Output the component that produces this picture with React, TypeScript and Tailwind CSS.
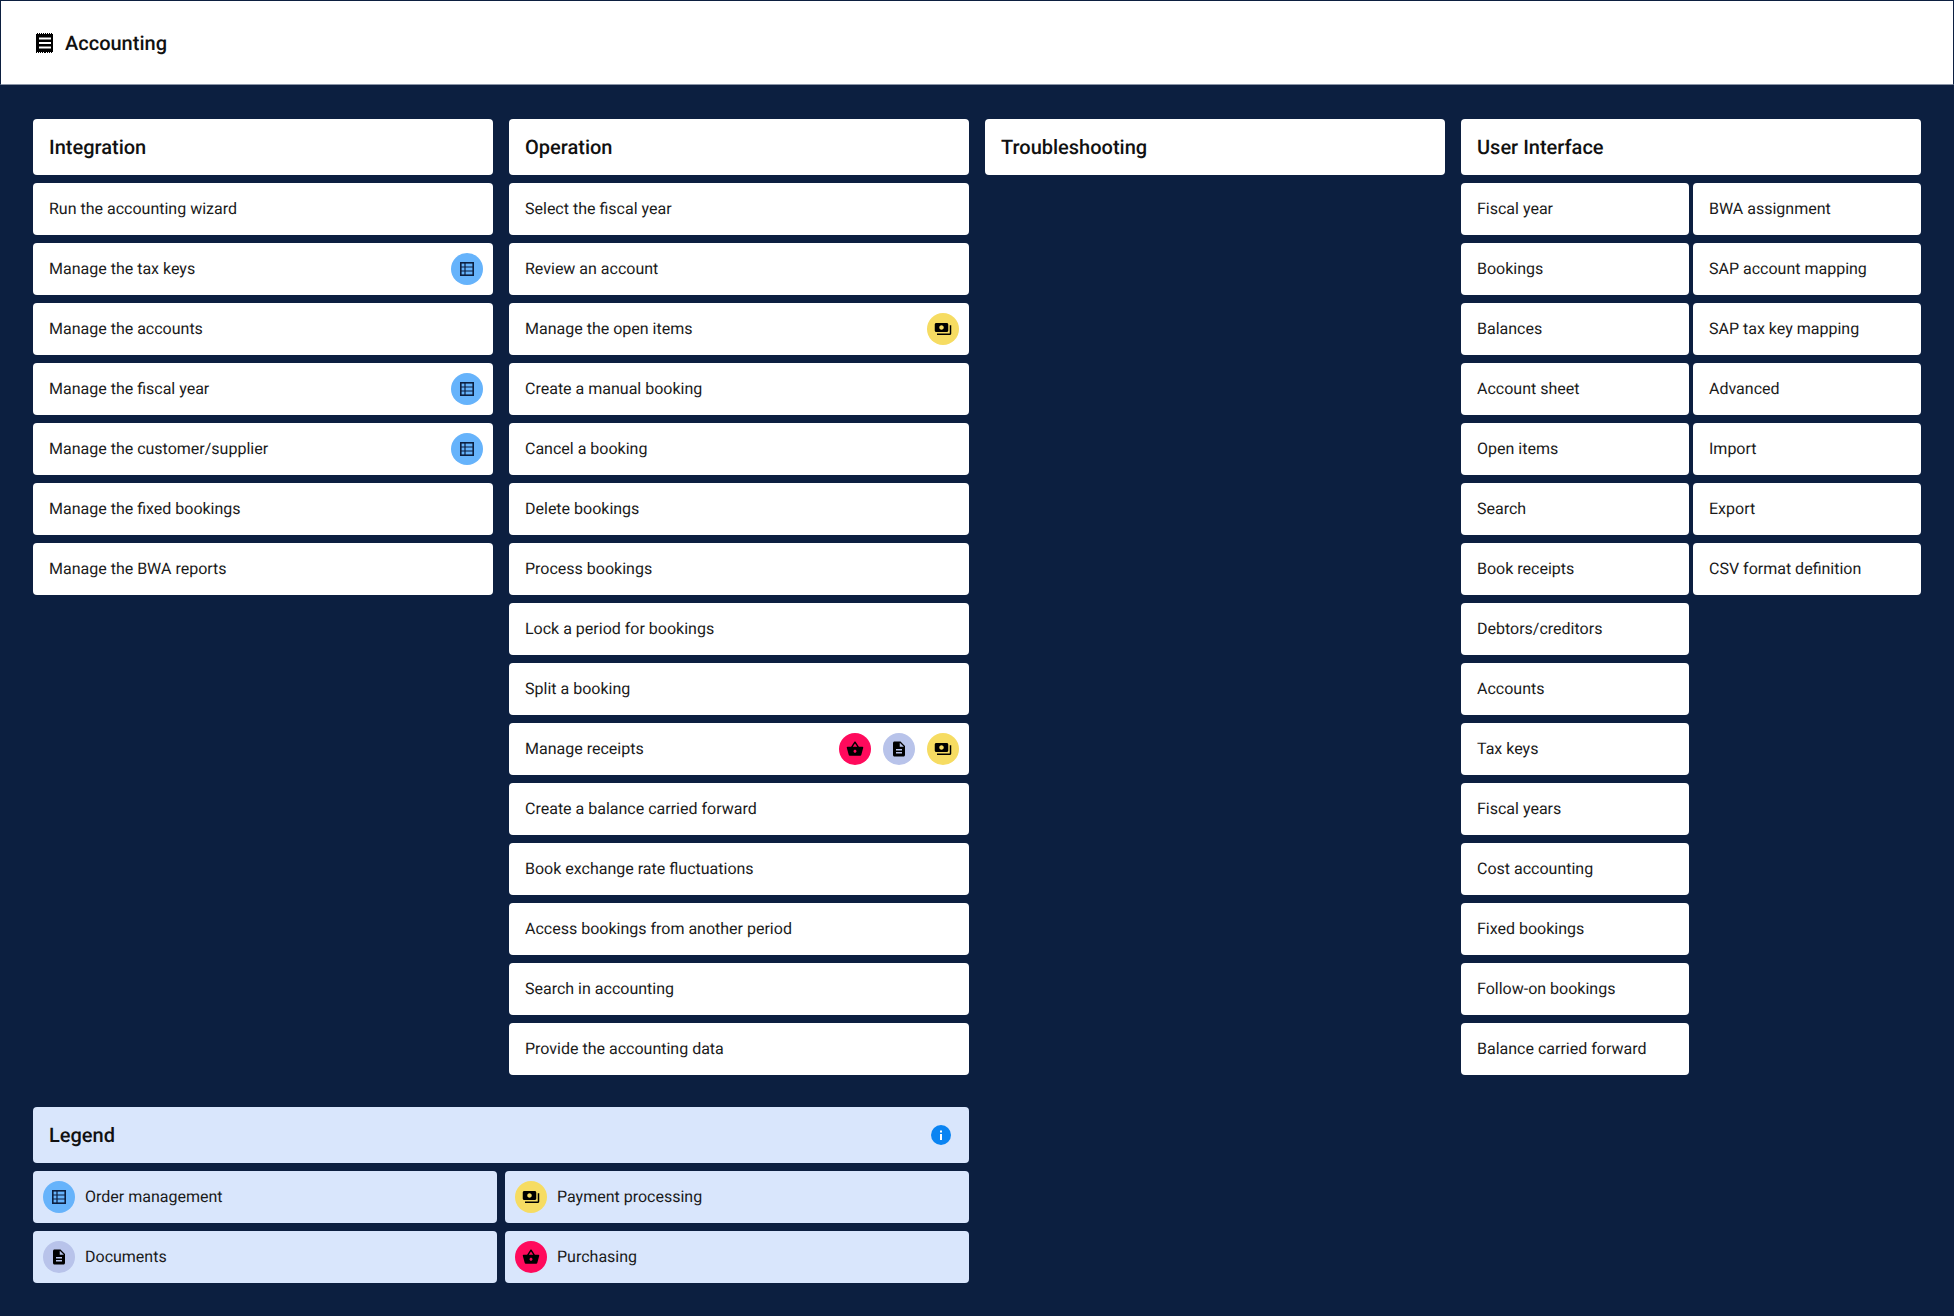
import React from 'react';

const font = 'font-["Roboto",_"Liberation_Sans",_sans-serif]';

type IconKind = 'orders' | 'payment' | 'documents' | 'purchasing';

const TableIcon = () => (
  <svg width="14" height="14" viewBox="0 0 14 14">
    <rect x="0.8" y="0.8" width="12.4" height="12.4" fill="none" stroke="#0c1f40" strokeWidth="1.6" />
    <path d="M5 1v12M1 5h12M1 9h12" stroke="#0c1f40" strokeWidth="1.2" fill="none" />
  </svg>
);

const MoneyIcon = () => (
  <svg width="18" height="18" viewBox="0 0 24 24" fill="#000">
    <path d="M19 14V6c0-1.1-.9-2-2-2H3c-1.1 0-2 .9-2 2v8c0 1.1.9 2 2 2h14c1.1 0 2-.9 2-2zm-9-1c-1.66 0-3-1.34-3-3s1.34-3 3-3 3 1.34 3 3-1.34 3-3 3zm13-6v11c0 1.1-.9 2-2 2H4v-2h17V7h2z" />
  </svg>
);

const DocIcon = () => (
  <svg width="18" height="18" viewBox="0 0 24 24" fill="#000">
    <path d="M14 2H6c-1.1 0-2 .9-2 2v16c0 1.1.9 2 2 2h12c1.1 0 2-.9 2-2V8l-6-6zm2 16H8v-2h8v2zm0-4H8v-2h8v2zm-3-5V3.5L18.5 9H13z" />
  </svg>
);

const BasketIcon = () => (
  <svg width="18" height="18" viewBox="0 0 24 24" fill="#000">
    <path d="M17.21 9l-4.38-6.56c-.19-.28-.51-.42-.83-.42-.32 0-.64.14-.83.43L6.79 9H2c-.55 0-1 .45-1 1 0 .09.01.18.04.27l2.54 9.27c.23.84 1 1.46 1.92 1.46h13c.92 0 1.69-.62 1.93-1.46l2.54-9.27L23 10c0-.55-.45-1-1-1h-4.79zM9 9l3-4.4L15 9H9zm3 8c-1.1 0-2-.9-2-2s.9-2 2-2 2 .9 2 2-.9 2-2 2z" />
  </svg>
);

const InfoIcon = () => (
  <svg width="20" height="20" viewBox="0 0 20 20">
    <circle cx="10" cy="10" r="10" fill="#0a84f2" />
    <rect x="9" y="9" width="2" height="6" fill="#fff" />
    <rect x="9" y="5.5" width="2" height="2" fill="#fff" />
  </svg>
);

const ReceiptIcon = () => (
  <svg width="18" height="20" viewBox="0 0 18 20" className="shrink-0">
    <path
      d="M0 1h1V0h1v1h1V0h1v1h1V0h1v1h1V0h1v1h1V0h1v1h1V0h1v1h1V0h1v1h1V0h1v1h1v18h-1v1h-1v-1h-1v1h-1v-1h-1v1h-1v-1h-1v1h-1v-1H9v1H8v-1H7v1H6v-1H5v1H4v-1H3v1H2v-1H1v1H0z"
      fill="#000"
    />
    <path d="M3 4.5h12v2H3zM3 9h12v2H3zM3 13.5h12v2H3z" fill="#fff" />
  </svg>
);

const Badge = ({ kind }: { kind: IconKind }) => {
  if (kind === 'orders') {
    return (
      <span className="w-8 h-8 rounded-full bg-[#66b3fb] flex items-center justify-center shrink-0">
        <TableIcon />
      </span>
    );
  }
  if (kind === 'payment') {
    return (
      <span className="w-8 h-8 rounded-full bg-[#f6dc62] flex items-center justify-center shrink-0">
        <MoneyIcon />
      </span>
    );
  }
  if (kind === 'documents') {
    return (
      <span className="w-8 h-8 rounded-full bg-[#b8c3ea] flex items-center justify-center shrink-0">
        <DocIcon />
      </span>
    );
  }
  return (
    <span className="w-8 h-8 rounded-full bg-[#ff0a5c] flex items-center justify-center shrink-0">
      <BasketIcon />
    </span>
  );
};

const ColumnTitle = ({ title }: { title: string }) => (
  <div className="h-14 rounded bg-white flex items-center px-4 text-xl font-medium text-[#111]">{title}</div>
);

const Row = ({ label, icons = [] }: { label: string; icons?: IconKind[] }) => (
  <div className="h-[52px] rounded bg-white flex items-center justify-between pl-4 pr-2.5 text-base text-[#1a1a1a]">
    <span>{label}</span>
    {icons.length > 0 && (
      <div className="flex items-center gap-3">
        {icons.map((kind) => (
          <Badge key={kind} kind={kind} />
        ))}
      </div>
    )}
  </div>
);

const LegendItem = ({ kind, label }: { kind: IconKind; label: string }) => (
  <div className="h-[52px] rounded bg-[#d9e6fc] flex items-center gap-2.5 px-2.5 text-base text-[#1a1a1a]">
    <Badge kind={kind} />
    <span>{label}</span>
  </div>
);

const integration: { label: string; icons?: IconKind[] }[] = [
  { label: 'Run the accounting wizard' },
  { label: 'Manage the tax keys', icons: ['orders'] },
  { label: 'Manage the accounts' },
  { label: 'Manage the fiscal year', icons: ['orders'] },
  { label: 'Manage the customer/supplier', icons: ['orders'] },
  { label: 'Manage the fixed bookings' },
  { label: 'Manage the BWA reports' },
];

const operation: { label: string; icons?: IconKind[] }[] = [
  { label: 'Select the fiscal year' },
  { label: 'Review an account' },
  { label: 'Manage the open items', icons: ['payment'] },
  { label: 'Create a manual booking' },
  { label: 'Cancel a booking' },
  { label: 'Delete bookings' },
  { label: 'Process bookings' },
  { label: 'Lock a period for bookings' },
  { label: 'Split a booking' },
  { label: 'Manage receipts', icons: ['purchasing', 'documents', 'payment'] },
  { label: 'Create a balance carried forward' },
  { label: 'Book exchange rate fluctuations' },
  { label: 'Access bookings from another period' },
  { label: 'Search in accounting' },
  { label: 'Provide the accounting data' },
];

const interfaceMain = [
  'Fiscal year',
  'Bookings',
  'Balances',
  'Account sheet',
  'Open items',
  'Search',
  'Book receipts',
  'Debtors/creditors',
  'Accounts',
  'Tax keys',
  'Fiscal years',
  'Cost accounting',
  'Fixed bookings',
  'Follow-on bookings',
  'Balance carried forward',
];

const interfaceSide = [
  'BWA assignment',
  'SAP account mapping',
  'SAP tax key mapping',
  'Advanced',
  'Import',
  'Export',
  'CSV format definition',
];

export default function App() {
  return (
    <div className={`${font} min-h-[1316px] bg-[#0c1f40] antialiased [text-rendering:geometricPrecision]`}>
      <header className="h-[85px] bg-white border border-[#0c1f40] border-b-[#8a94a6] flex items-center gap-[11px] pl-[35px] text-xl font-medium text-[#111]">
        <ReceiptIcon />
        <span>Accounting</span>
      </header>

      <main className="px-[33px] pt-[34px] pb-[33px]">
        <div className="grid grid-cols-4 gap-4">
          <section className="flex flex-col gap-2">
            <ColumnTitle title="Integration" />
            {integration.map((item) => (
              <Row key={item.label} label={item.label} icons={item.icons} />
            ))}
          </section>

          <section className="flex flex-col gap-2">
            <ColumnTitle title="Operation" />
            {operation.map((item) => (
              <Row key={item.label} label={item.label} icons={item.icons} />
            ))}
          </section>

          <section className="flex flex-col gap-2">
            <ColumnTitle title="Troubleshooting" />
          </section>

          <section className="flex flex-col gap-2">
            <ColumnTitle title="User Interface" />
            <div className="grid grid-cols-2 gap-1 items-start">
              <div className="flex flex-col gap-2">
                {interfaceMain.map((label) => (
                  <Row key={label} label={label} />
                ))}
              </div>
              <div className="flex flex-col gap-2">
                {interfaceSide.map((label) => (
                  <Row key={label} label={label} />
                ))}
              </div>
            </div>
          </section>
        </div>

        <div className="grid grid-cols-4 gap-4 mt-8">
          <section className="col-span-2 flex flex-col gap-2">
            <div className="h-14 rounded bg-[#d9e6fc] flex items-center justify-between pl-4 pr-[18px] text-xl font-medium text-[#111]">
              <span>Legend</span>
              <InfoIcon />
            </div>
            <div className="grid grid-cols-2 gap-2">
              <LegendItem kind="orders" label="Order management" />
              <LegendItem kind="payment" label="Payment processing" />
              <LegendItem kind="documents" label="Documents" />
              <LegendItem kind="purchasing" label="Purchasing" />
            </div>
          </section>
        </div>
      </main>
    </div>
  );
}
